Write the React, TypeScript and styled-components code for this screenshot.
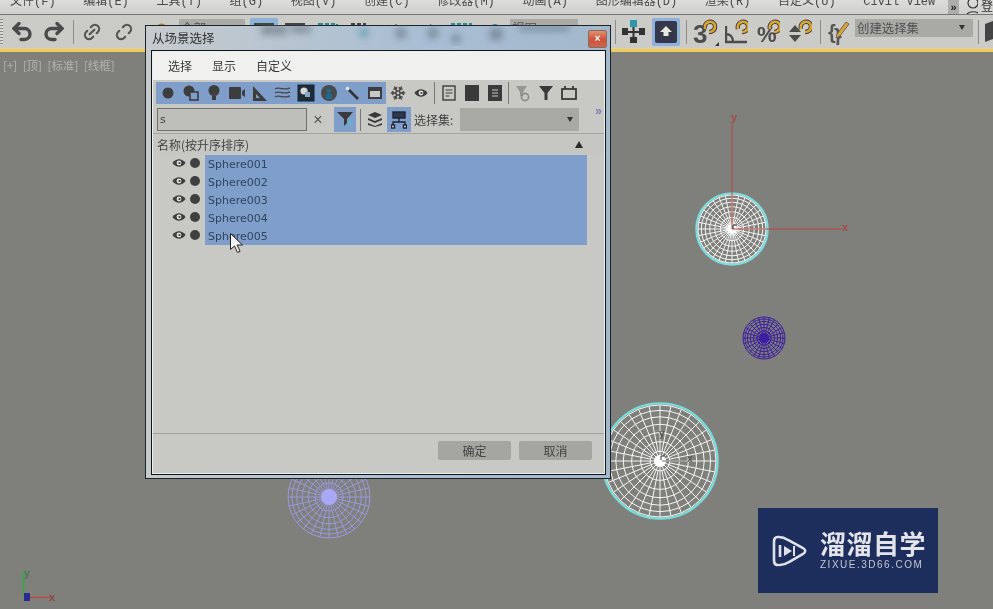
import React from "react";
import styled, { createGlobalStyle } from "styled-components";
import { Snowflake, Undo2, Redo2, Link2, Unlink2 } from "lucide-react";

const Global = createGlobalStyle`
  html, body { margin: 0; padding: 0; width: 993px; height: 609px; overflow: hidden; background: #7f7f7c; }
  * { box-sizing: border-box; }
`;

const CJK = `"Liberation Mono", "Noto Sans CJK SC", monospace`;
const UI = `"Noto Sans CJK SC", "Liberation Sans", sans-serif`;

const Screen = styled.div`
  position: relative;
  width: 993px;
  height: 609px;
  display: flex;
  flex-direction: column;
  overflow: hidden;
  filter: blur(0.35px);
  font-family: ${UI};
  color: #444;
`;

const MenuBar = styled.div`
  height: 15px;
  flex: none;
  display: flex;
  align-items: flex-end;
  gap: 27.6px;
  padding: 0 0 6px 10px;
  overflow: hidden;
  background: linear-gradient(#dcdcda, #d0d0ce);
  border-bottom: 1px solid #77777a;
  position: relative;
`;
const MenuItem = styled.span`
  font: 12px/12px ${CJK};
  color: #4a4a4a;
  white-space: nowrap;
  flex: none;
`;
const MoreChip = styled.span`
  position: absolute;
  left: 948px;
  top: 0;
  width: 11px;
  height: 15px;
  background: #adadab;
  font: bold 11px/15px "Liberation Sans", sans-serif;
  text-align: center;
  color: #222;
`;
const UserZone = styled.span`
  position: absolute;
  left: 966px;
  top: 0;
  width: 27px;
  height: 14px;
  overflow: hidden;
  display: flex;
  font: 12px/12px ${UI};
  color: #333;
  gap: 3px;
`;

const Toolbar = styled.div`
  height: 33px;
  flex: none;
  display: flex;
  align-items: center;
  background: #cbcbc7;
  overflow: hidden;
`;
const Grip = styled.div`
  width: 3px;
  height: 26px;
  flex: none;
  background: repeating-linear-gradient(#8a8a88 0 1px, #d8d8d6 1px 3px);
`;
const Slot = styled.div<{ $ml: number; $w: number; $on?: boolean }>`
  flex: none;
  margin-left: ${(p) => p.$ml}px;
  width: ${(p) => p.$w}px;
  height: 28px;
  display: flex;
  align-items: center;
  justify-content: center;
  border-radius: 2px;
  background: ${(p) => (p.$on ? "#8fb0d8" : "transparent")};
  svg { display: block; }
`;
const Sep = styled.div<{ $ml: number }>`
  flex: none;
  width: 1px;
  height: 24px;
  margin-left: ${(p) => p.$ml}px;
  background: #8c8c8a;
`;
const TopCombo = styled.div<{ $ml: number; $w: number }>`
  flex: none;
  margin: -8px 0 0 ${(p) => p.$ml}px;
  width: ${(p) => p.$w}px;
  height: 18px;
  padding: 0 8px 0 2px;
  display: flex;
  align-items: center;
  justify-content: space-between;
  background: #a9a9a6;
  font: 12.4px/18px ${UI};
  color: #505050;
`;
const SmallCaret = styled.i`
  width: 0;
  height: 0;
  border: 3px solid transparent;
  border-top: 5px solid #333;
  border-bottom: 0;
`;
const GoldLine = styled.div`
  height: 4px;
  flex: none;
  background: linear-gradient(#dfd7a8, #ecca5c 50%);
`;

const Viewport = styled.div`
  position: relative;
  flex: 1;
  background: #7f7f7c;
`;
const ViewLabel = styled.div`
  position: absolute;
  left: 3px;
  top: 7px;
  font: 11.5px/13px ${UI};
  color: #b4b4b0;
  word-spacing: 3px;
  white-space: nowrap;
`;
const Scene = styled.svg`
  position: absolute;
  left: 0;
  top: 0;
`;
const Stamp = styled.div`
  position: absolute;
  left: 758px;
  top: 456px;
  width: 180px;
  height: 85px;
  background: #1d2e5c;
  display: flex;
  align-items: center;
  padding-left: 14px;
  gap: 12px;
`;
const StampText = styled.div`
  display: flex;
  flex-direction: column;
  color: #e2e4ea;
  margin-top: -1px;
`;
const StampTitle = styled.div`
  font: 700 26px/28px "Noto Sans CJK SC", sans-serif;
  letter-spacing: 0.5px;
  white-space: nowrap;
`;
const StampUrl = styled.div`
  margin-top: 2px;
  font: 10px/12px "Liberation Sans", sans-serif;
  letter-spacing: 1.5px;
  color: #c4c8d4;
  white-space: nowrap;
`;

const Dialog = styled.div`
  position: absolute;
  left: 145px;
  top: 25px;
  width: 466px;
  height: 454px;
  display: flex;
  flex-direction: column;
  border: 1px solid #1d2226;
  background: linear-gradient(90deg, #c6cbcd, #a9bed4 60%, #a4b8cc);
  padding: 0 4px 3px 5px;
`;
const TitleBar = styled.div`
  position: relative;
  height: 24px;
  flex: none;
  display: flex;
  align-items: center;
  justify-content: space-between;
  padding-left: 1px;
  font: 12.5px/16px ${UI};
  color: #333;
`;
const TitleGlass = styled.svg`
  position: absolute;
  left: 0;
  top: -1px;
`;
const TitleText = styled.span`
  position: relative;
`;
const CloseBtn = styled.button`
  position: relative;
  width: 19px;
  height: 18px;
  margin: 2px -1px 0 0;
  padding: 0;
  border: 1px solid #8a6a60;
  border-radius: 2px;
  background: linear-gradient(#e09070, #d0503a 55%, #c86a50);
  color: #fff;
  font: bold 10px/14px "Liberation Sans", sans-serif;
`;
const Inner = styled.div`
  flex: 1;
  min-height: 0;
  display: flex;
  flex-direction: column;
  border: 1px solid #141414;
  outline: 1px solid #e9eef2;
  outline-offset: -2px;
  background: #c8c8c4;
`;
const DlgMenu = styled.div`
  height: 28px;
  flex: none;
  margin: 1px 1px 0;
  display: flex;
  align-items: center;
  gap: 20px;
  padding-left: 15px;
  background: #f0f0ee;
  font: 12px/16px ${UI};
  color: #3a3a3a;
`;
const ToolArea = styled.div`
  height: 53px;
  flex: none;
  display: flex;
  flex-direction: column;
  position: relative;
  padding-left: 4px;
`;
const IconRow = styled.div`
  height: 22px;
  margin-top: 2px;
  display: flex;
  align-items: center;
`;
const BlueGroup = styled.div`
  width: 230px;
  height: 22px;
  padding-left: 0;
  display: flex;
  align-items: center;
  background: #7f9fca;
`;
const Cell = styled.div<{ $on?: boolean }>`
  width: 23px;
  height: 22px;
  flex: none;
  display: flex;
  align-items: center;
  justify-content: center;
  svg { display: block; }
`;
const DlgSep = styled.div<{ $mx?: number }>`
  width: 1px;
  height: 22px;
  flex: none;
  background: #777;
  margin: 0 ${(p) => p.$mx ?? 3}px;
`;
const SearchRow = styled.div`
  height: 25px;
  margin-top: 3px;
  display: flex;
  align-items: center;
`;
const SearchInput = styled.div`
  width: 150px;
  height: 23px;
  margin-left: 1px;
  border: 1px solid #707070;
  background: #bebeba;
  font: 11px/21px "DejaVu Sans", sans-serif;
  padding-left: 2px;
  color: #444;
`;
const ClearX = styled.div`
  width: 22px;
  text-align: center;
  margin-left: 0;
  font: 16px/23px "Liberation Sans", sans-serif;
  color: #555;
`;
const ToggleBtn = styled.div<{ $ml: number; $w: number }>`
  width: ${(p) => p.$w}px;
  height: 25px;
  margin-left: ${(p) => p.$ml}px;
  flex: none;
  display: flex;
  align-items: center;
  justify-content: center;
  background: ${(p) => (p.$w > 20 ? "#7f9fca" : "transparent")};
`;
const SetLabel = styled.span`
  margin-left: 3px;
  width: 46px;
  font: 12px/16px ${UI};
  color: #444;
  white-space: nowrap;
`;
const SetCombo = styled.div`
  width: 119px;
  height: 23px;
  background: #a8a8a5;
  display: flex;
  align-items: center;
  justify-content: flex-end;
  padding-right: 6px;
`;
const MoreArrows = styled.span`
  position: absolute;
  right: 3px;
  top: 25px;
  font: bold 12px/12px "Liberation Sans", sans-serif;
  color: #7a7ab8;
`;
const ListHead = styled.div`
  height: 22px;
  flex: none;
  margin: 0 1px;
  display: flex;
  align-items: center;
  justify-content: space-between;
  padding: 0 21px 0 4px;
  background: #c6c6c2;
  border-top: 1px solid #a4a4a0;
  font: 12px/16px ${UI};
  color: #444;
`;
const UpTri = styled.i`
  width: 0;
  height: 0;
  border: 4px solid transparent;
  border-top: 0;
  border-bottom: 7px solid #2a2a2a;
`;
const List = styled.div`
  flex: 1;
  padding-left: 0;
  display: flex;
  flex-direction: column;
`;
const Row = styled.div`
  height: 18px;
  flex: none;
  display: flex;
  align-items: center;
`;
const RowMarks = styled.div`
  width: 53px;
  padding-left: 20px;
  height: 18px;
  margin-top: -3px;
  display: flex;
  align-items: center;
  gap: 4px;
  flex: none;
`;
const Dot = styled.i`
  width: 10px;
  height: 10px;
  border-radius: 50%;
  background: #404040;
`;
const RowName = styled.div`
  width: 382px;
  height: 18px;
  padding-left: 3px;
  background: #7f9fca;
  font: 11px/19px "DejaVu Sans", sans-serif;
  color: #2f4560;
`;
const Footer = styled.div`
  height: 41px;
  flex: none;
  border-top: 1px solid #a0a09c;
  display: flex;
  justify-content: flex-end;
  align-items: flex-start;
  gap: 8px;
  padding: 7px 13px 0 0;
`;
const DlgButton = styled.div`
  width: 73px;
  height: 19px;
  background: #a5a5a2;
  border-radius: 2px;
  text-align: center;
  font: 12px/20px ${UI};
  color: #444;
`;
const Pointer = styled.svg`
  position: absolute;
  left: 229px;
  top: 232px;
`;

const Magnet = () => (
  <g fill="none" strokeLinecap="butt">
    <path d="M13 11 C11 3 22 1 23 8 C23.5 12 20 14 17 14" stroke="#3c3c3c" strokeWidth="4.4" />
    <path d="M13 11 C11 3 22 1 23 8 C23.5 12 20 14 17 14" stroke="#dba433" strokeWidth="2.6" />
  </g>
);
const SvgT = styled.text`
  font-family: "Liberation Sans", sans-serif;
  font-weight: 700;
`;

function Wire({ cx, cy, r, color, rings, spokes, w = 1, halo }: { cx: number; cy: number; r: number; color: string; rings: number; spokes: number; w?: number; halo?: string }) {
  const ringR = (i: number) => r * (0.6 * (i / rings) + 0.4 * Math.sin(((i / rings) * Math.PI) / 2));
  const ringEls = [];
  for (let i = 1; i <= rings; i++) {
    ringEls.push(<circle key={i} cx={cx} cy={cy} r={ringR(i)} />);
  }
  const spokeEls = [];
  const inner = ringR(1);
  for (let i = 0; i < spokes; i++) {
    const a = (i / spokes) * Math.PI * 2;
    const from = i % 2 === 0 ? 0 : inner;
    spokeEls.push(
      <line key={i} x1={cx + from * Math.cos(a)} y1={cy + from * Math.sin(a)} x2={cx + r * Math.cos(a)} y2={cy + r * Math.sin(a)} />,
    );
  }
  return (
    <g fill="none" stroke={color} strokeWidth={w}>
      {halo && <circle cx={cx} cy={cy} r={r + 1.6} stroke={halo} strokeWidth={2.4} />}
      {ringEls}
      {spokeEls}
    </g>
  );
}

const SphereIco = () => <svg width="16" height="16"><circle cx="8" cy="8" r="5.5" fill="#3d3d3d" /></svg>;
const ShapesIco = () => (
  <svg width="18" height="18"><circle cx="7" cy="7" r="5.5" fill="#3d3d3d" /><rect x="8" y="8" width="8" height="8" fill="#7f9fca" stroke="#3d3d3d" strokeWidth="1.6" /></svg>
);
const BulbIco = () => (
  <svg width="16" height="18"><circle cx="8" cy="6.5" r="5.5" fill="#3d3d3d" /><rect x="6" y="12" width="4" height="4" fill="#3d3d3d" /></svg>
);
const CamIco = () => (
  <svg width="18" height="16"><rect x="1" y="2" width="12" height="12" rx="1" fill="#3d3d3d" /><path d="M14 6l3-2v8l-3-2z" fill="#3d3d3d" /></svg>
);
const AngleIco = () => (
  <svg width="17" height="17"><path d="M2 1v15h14z" fill="#3d3d3d" /><path d="M5 9v4h4z" fill="#7f9fca" /></svg>
);
const WavesIco = () => (
  <svg width="17" height="16" fill="none" stroke="#4a4a4a" strokeWidth="1.4">
    <path d="M1 4c4-3 6 2 15-1M1 8c4-3 6 2 15-1M1 12c4-3 6 2 15-1" />
  </svg>
);
const GroupSel = () => (
  <svg width="18" height="18"><rect x="1" y="1" width="16" height="16" fill="#1f2c38" stroke="#123" /><circle cx="7" cy="7" r="3.6" fill="#d8d8d8" /><rect x="8" y="8" width="5" height="5" fill="#88a8c8" /></svg>
);
const XrefIco = () => (
  <svg width="18" height="18"><circle cx="9" cy="9" r="8" fill="#4a4a4a" /><circle cx="9" cy="7" r="2.4" fill="#1e6a8a" /><rect x="6" y="10" width="6" height="5" fill="#1e6a8a" /></svg>
);
const WandIco = () => (
  <svg width="16" height="16"><path d="M5 5l9 9" stroke="#333" strokeWidth="2.6" /><circle cx="3.5" cy="3.5" r="1.8" fill="#e4e4e4" /></svg>
);
const BoxIco = () => (
  <svg width="16" height="14"><rect x="1" y="1" width="14" height="12" fill="#3d3d3d" /><rect x="3" y="5" width="10" height="6" fill="#c8c8c4" /></svg>
);
const EyeIco = ({ fill = "#3d3d3d" }: { fill?: string }) => (
  <svg width="14" height="10"><path d="M0.5 5C4 0 10 0 13.5 5 10 10 4 10 0.5 5z" fill={fill} /><circle cx="7" cy="5" r="2.4" fill="#e4e4e2" /><circle cx="7.4" cy="5" r="1.1" fill={fill} /></svg>
);
const DocIco = () => (
  <svg width="14" height="16" fill="none" stroke="#3d3d3d"><rect x="1" y="1" width="12" height="14" strokeWidth="1.4" /><path d="M3.5 5h7M3.5 8h7M3.5 11h4" /></svg>
);
const SolidIco = () => <svg width="14" height="16"><rect width="14" height="16" fill="#3a3a3a" /></svg>;
const DocDarkIco = () => (
  <svg width="14" height="16" stroke="#c8c8c4"><rect width="14" height="16" fill="#3a3a3a" stroke="none" /><path d="M4 5h6M4 8h6M4 11h6" /></svg>
);
const FunnelFade = () => (
  <svg width="16" height="17"><path d="M1 1h11L8 7v4H5V7z" fill="#969692" /><circle cx="10" cy="12" r="3.6" fill="none" stroke="#8a8a86" strokeWidth="1.6" /></svg>
);
const FunnelIco = () => <svg width="16" height="16"><path d="M1 1h14L9.5 8v7h-3V8z" fill="#3a3a3a" /></svg>;
const CalIco = () => (
  <svg width="16" height="14" fill="none" stroke="#3a3a3a" strokeWidth="1.8"><rect x="1" y="3" width="14" height="10" /><path d="M4 0v3M12 0v3" /></svg>
);

const menus = ["文件(F)", "编辑(E)", "工具(T)", "组(G)", "视图(V)", "创建(C)", "修改器(M)", "动画(A)", "图形编辑器(D)", "渲染(R)", "自定义(U)", "Civil View"];
const names = ["Sphere001", "Sphere002", "Sphere003", "Sphere004", "Sphere005"];

export default function App() {
  return (
    <Screen>
      <Global />
      <MenuBar>
        {menus.map((m) => (
          <MenuItem key={m}>{m}</MenuItem>
        ))}
        <MoreChip>»</MoreChip>
        <UserZone>
          <svg width="14" height="15" fill="none" stroke="#333" strokeWidth="1.2">
            <circle cx="7" cy="3" r="5" />
            <path d="M1 14c2-3 10-3 12 0" />
          </svg>
          <span>登</span>
        </UserZone>
      </MenuBar>
      <Toolbar>
        <Grip />
        <Slot $ml={7} $w={24}><Undo2 size={27} color="#4a4a4a" strokeWidth={3.4} /></Slot>
        <Slot $ml={8} $w={24}><Redo2 size={27} color="#4a4a4a" strokeWidth={3.4} /></Slot>
        <Sep $ml={7} />
        <Slot $ml={8} $w={20}><Link2 size={28} color="#555" strokeWidth={2.6} style={{ transform: "rotate(-45deg)" }} /></Slot>
        <Slot $ml={12} $w={20}><Unlink2 size={28} color="#555" strokeWidth={2.6} style={{ transform: "rotate(-45deg)" }} /></Slot>
        <Slot $ml={21} $w={13}><svg width="13" height="20"><circle cx="6.5" cy="7" r="4.5" fill="none" stroke="#a08030" strokeWidth="2" /></svg></Slot>
        <TopCombo $ml={11} $w={66}>全部</TopCombo>
        <Slot $ml={5} $w={28} $on><svg width="20" height="22"><rect x="0" y="2" width="20" height="18" fill="#3c4a44" /></svg></Slot>
        <Slot $ml={7} $w={20}><svg width="20" height="22"><rect y="2" width="20" height="3" fill="#444" /></svg></Slot>
        <Slot $ml={13} $w={20}><svg width="20" height="22" fill="none" stroke="#2e8a94" strokeWidth="2" strokeDasharray="4 2"><rect x="1" y="3" width="18" height="16" /></svg></Slot>
        <Slot $ml={12} $w={16}><svg width="16" height="22" fill="none" stroke="#444" strokeWidth="2" strokeDasharray="4 2"><rect x="1" y="3" width="14" height="16" /></svg></Slot>
        <Slot $ml={26} $w={8}><svg width="8" height="22"><path d="M4 3l4 4-4 4-4-4z" fill="#444" /></svg></Slot>
        <Slot $ml={30} $w={8}><svg width="8" height="22"><path d="M0 3l8 5-8 5z" fill="#444" /></svg></Slot>
        <Slot $ml={12} $w={22}><svg width="22" height="22" fill="none" stroke="#2e8a94" strokeWidth="2" strokeDasharray="4 2"><rect x="1" y="3" width="20" height="16" /></svg></Slot>
        <Slot $ml={16} $w={14}><svg width="14" height="22"><circle cx="7" cy="9" r="6" fill="#2e8a94" /></svg></Slot>
        <TopCombo $ml={8} $w={68}>视图</TopCombo>
        <Slot $ml={6} $w={12}><svg width="12" height="22"><rect y="6" width="12" height="10" fill="#444" /></svg></Slot>
        <Slot $ml={2} $w={9}><svg width="9" height="22"><rect y="6" width="9" height="10" fill="#444" /></svg></Slot>
        <Sep $ml={8} />
        <Slot $ml={6} $w={24}>
          <svg width="24" height="24">
            <rect x="8" y="0" width="7" height="7" fill="#2b9aa6" />
            <path d="M11.5 7v12M3 12h18" stroke="#333" strokeWidth="2" />
            <rect x="0" y="8" width="6" height="7" fill="#333" />
            <rect x="17" y="8" width="6" height="7" fill="#333" />
            <rect x="8" y="17" width="7" height="6" fill="#333" />
          </svg>
        </Slot>
        <Slot $ml={6} $w={28} $on>
          <svg width="22" height="22">
            <rect width="22" height="22" rx="2" fill="#34384a" />
            <path d="M11 5l6 6h-3.5v4h-5v-4H5z" fill="#e8e8e0" />
          </svg>
        </Slot>
        <Sep $ml={6} />
        <Slot $ml={5} $w={28}>
          <svg width="28" height="28">
            <SvgT x="1" y="25" fontSize="26" fill="#4c4c4c">3</SvgT>
            <Magnet />
            <path d="M27 24v4h-4z" fill="#333" />
          </svg>
        </Slot>
        <Slot $ml={5} $w={23}>
          <svg width="24" height="28" fill="none" stroke="#4c4c4c" strokeWidth="2.4">
            <path d="M1 8v16h21M1 16c4 0 7 3 7 8" />
            <Magnet />
          </svg>
        </Slot>
        <Slot $ml={9} $w={23}>
          <svg width="24" height="28">
            <SvgT x="0" y="24" fontSize="22" fill="#4c4c4c">%</SvgT>
            <Magnet />
          </svg>
        </Slot>
        <Slot $ml={8} $w={24}>
          <svg width="24" height="28">
            <path d="M1 14l6-7 6 7zM1 17h12l-6 7z" fill="#4c4c4c" />
            <Magnet />
          </svg>
        </Slot>
        <Sep $ml={8} />
        <Slot $ml={7} $w={22}>
          <svg width="22" height="26">
            <SvgT x="0" y="20" fontSize="20" fill="#555" fontWeight="400">{"{"}</SvgT>
            <SvgT x="6" y="24" fontSize="20" fill="#555" fontWeight="400">{"}"}</SvgT>
            <path d="M9 15l9-12 3 2-9 12-4 2z" fill="#dba433" stroke="#555" strokeWidth="0.8" />
          </svg>
        </Slot>
        <TopCombo $ml={5} $w={118}>创建选择集<SmallCaret /></TopCombo>
        <Sep $ml={5} />
        <Slot $ml={6} $w={8}><svg width="8" height="24"><path d="M0 4l8-3v18l-8 3z" fill="#444" /></svg></Slot>
      </Toolbar>
      <GoldLine />
      <Viewport>
        <Scene width="993" height="557" viewBox="0 52 993 557">
          <Wire cx={732} cy={229} r={34} color="#f4f6f4" rings={7} spokes={32} w={1} halo="#7fdcdc" />
          <Wire cx={764} cy={338} r={21} color="#3c1fa0" rings={7} spokes={24} w={1} />
          <Wire cx={660} cy={461} r={56} color="#f6f6f4" rings={7} spokes={32} w={1} halo="#78dcd8" />
          <Wire cx={329} cy={497} r={41} color="#9c9ce4" rings={7} spokes={28} w={0.9} />
          <circle cx="732" cy="229" r="5" fill="#fff" />
          <circle cx="660" cy="461" r="6" fill="#fff" />
          <circle cx="764" cy="338" r="5" fill="#3c1fa0" />
          <circle cx="329" cy="497" r="8" fill="#a8a8f4" />
          <path d="M732 229V122M732 229H842" stroke="#b84440" strokeWidth="1" fill="none" />
          <path d="M733 229v-4h4" stroke="#222" strokeWidth="1" fill="none" />
          <SvgT x="731" y="121" fontSize="11" fill="#a84a44">y</SvgT>
          <SvgT x="842" y="231" fontSize="11" fill="#a84a44">x</SvgT>
          <path d="M661 460v-4h4" stroke="#333" strokeWidth="1" fill="none" />
          <path d="M662 461h24" stroke="#777" strokeWidth="1" />
          <SvgT x="659" y="437" fontSize="10" fill="#555">y</SvgT>
          <SvgT x="687" y="462" fontSize="10" fill="#555">x</SvgT>
          <path d="M23.5 597V571" stroke="#3aa84a" strokeWidth="1.8" />
          <path d="M28 597.5H50" stroke="#c84040" strokeWidth="1.2" />
          <rect x="24" y="593" width="6" height="8" fill="#2a2a90" />
          <SvgT x="24" y="577" fontSize="11" fill="#4a7a50">y</SvgT>
          <SvgT x="49" y="601" fontSize="11" fill="#8a4a44">x</SvgT>
        </Scene>
        <ViewLabel>[+] [顶] [标准] [线框]</ViewLabel>
        <Stamp>
          <svg width="36" height="38" fill="none" stroke="#dfe2e8" strokeWidth="2.6">
            <path d="M6 5C2 5 2 8 2 11V27c0 3 0 6 4 6M7 5c4 0 6 1 9 3l15 8c3 2 3 4 0 6L17 30c-3 2-6 3-9 3" strokeLinecap="round" />
            <path d="M8 13v12" />
            <path d="M12 14l8 5-8 5z" fill="#dfe2e8" stroke="none" />
            <path d="M22 14v10" strokeWidth="2" />
          </svg>
          <StampText>
            <StampTitle>溜溜自学</StampTitle>
            <StampUrl>ZIXUE.3D66.COM</StampUrl>
          </StampText>
        </Stamp>
      </Viewport>
      <Dialog>
        <TitleBar>
          <TitleGlass width="460" height="26">
            <defs>
              <filter id="gl"><feGaussianBlur stdDeviation="3.5" /></filter>
            </defs>
            <g filter="url(#gl)" fill="#5c6a76" opacity="0.55">
              <rect x="110" y="0" width="26" height="10" />
              <rect x="140" y="0" width="20" height="8" />
              <circle cx="213" cy="8" r="5" fill="#3a8a9a" />
              <circle cx="250" cy="8" r="6" />
              <circle cx="282" cy="8" r="6" />
              <circle cx="305" cy="14" r="5" />
              <circle cx="345" cy="9" r="7" />
              <rect x="368" y="0" width="50" height="6" />
            </g>
          </TitleGlass>
          <TitleText>从场景选择</TitleText>
          <CloseBtn>×</CloseBtn>
        </TitleBar>
        <Inner>
          <DlgMenu>
            <span>选择</span>
            <span>显示</span>
            <span>自定义</span>
          </DlgMenu>
          <ToolArea>
            <IconRow>
              <BlueGroup>
                <Cell><SphereIco /></Cell>
                <Cell><ShapesIco /></Cell>
                <Cell><BulbIco /></Cell>
                <Cell><CamIco /></Cell>
                <Cell><AngleIco /></Cell>
                <Cell><WavesIco /></Cell>
                <Cell><GroupSel /></Cell>
                <Cell><XrefIco /></Cell>
                <Cell><WandIco /></Cell>
                <Cell><BoxIco /></Cell>
              </BlueGroup>
              <Cell><Snowflake size={16} color="#4a4a4a" strokeWidth={2.4} /></Cell>
              <Cell><EyeIco /></Cell>
              <DlgSep $mx={2} />
              <Cell><DocIco /></Cell>
              <Cell><SolidIco /></Cell>
              <Cell><DocDarkIco /></Cell>
              <DlgSep $mx={2} />
              <Cell><FunnelFade /></Cell>
              <Cell><FunnelIco /></Cell>
              <Cell><CalIco /></Cell>
            </IconRow>
            <SearchRow>
              <SearchInput>s</SearchInput>
              <ClearX>×</ClearX>
              <ToggleBtn $ml={5} $w={22}>
                <svg width="18" height="18">
                  <path d="M1 1h16l-6 7v4l-3 3V8z" fill="#3a3a3a" />
                  <path d="M12 9l5 4h-3l-2 3z" fill="#5ab8c8" />
                </svg>
              </ToggleBtn>
              <DlgSep $mx={4} />
              <ToggleBtn $ml={0} $w={19}>
                <svg width="16" height="17" fill="#3a3a3a">
                  <path d="M8 1l7 3-7 3-7-3zM1 7l7 3 7-3v2l-7 3-7-3zM1 12l7 3 7-3v2l-7 2-7-2z" />
                </svg>
              </ToggleBtn>
              <ToggleBtn $ml={3} $w={24}>
                <svg width="16" height="18" fill="none" stroke="#223" strokeWidth="1.4">
                  <rect x="2" y="1" width="12" height="6" fill="#2b3a50" />
                  <path d="M8 7v4M2 15v-4h12v4" />
                  <rect x="0.5" y="14" width="3" height="3" fill="#eee" />
                  <rect x="12.5" y="14" width="3" height="3" fill="#eee" />
                </svg>
              </ToggleBtn>
              <SetLabel>选择集:</SetLabel>
              <SetCombo><SmallCaret /></SetCombo>
            </SearchRow>
            <MoreArrows>»</MoreArrows>
          </ToolArea>
          <ListHead>
            <span>名称(按升序排序)</span>
            <UpTri />
          </ListHead>
          <List>
            {names.map((n) => (
              <Row key={n}>
                <RowMarks>
                  <EyeIco fill="#3e3e3e" />
                  <Dot />
                </RowMarks>
                <RowName>{n}</RowName>
              </Row>
            ))}
          </List>
          <Footer>
            <DlgButton>确定</DlgButton>
            <DlgButton>取消</DlgButton>
          </Footer>
        </Inner>
      </Dialog>
      <Pointer width="16" height="22">
        <path d="M1.5 1.5v16l4-3.5 3 6.5 2.6-1.2-3-6.3h5.4z" fill="#f4f4f4" stroke="#222" strokeWidth="1" />
      </Pointer>
    </Screen>
  );
}
